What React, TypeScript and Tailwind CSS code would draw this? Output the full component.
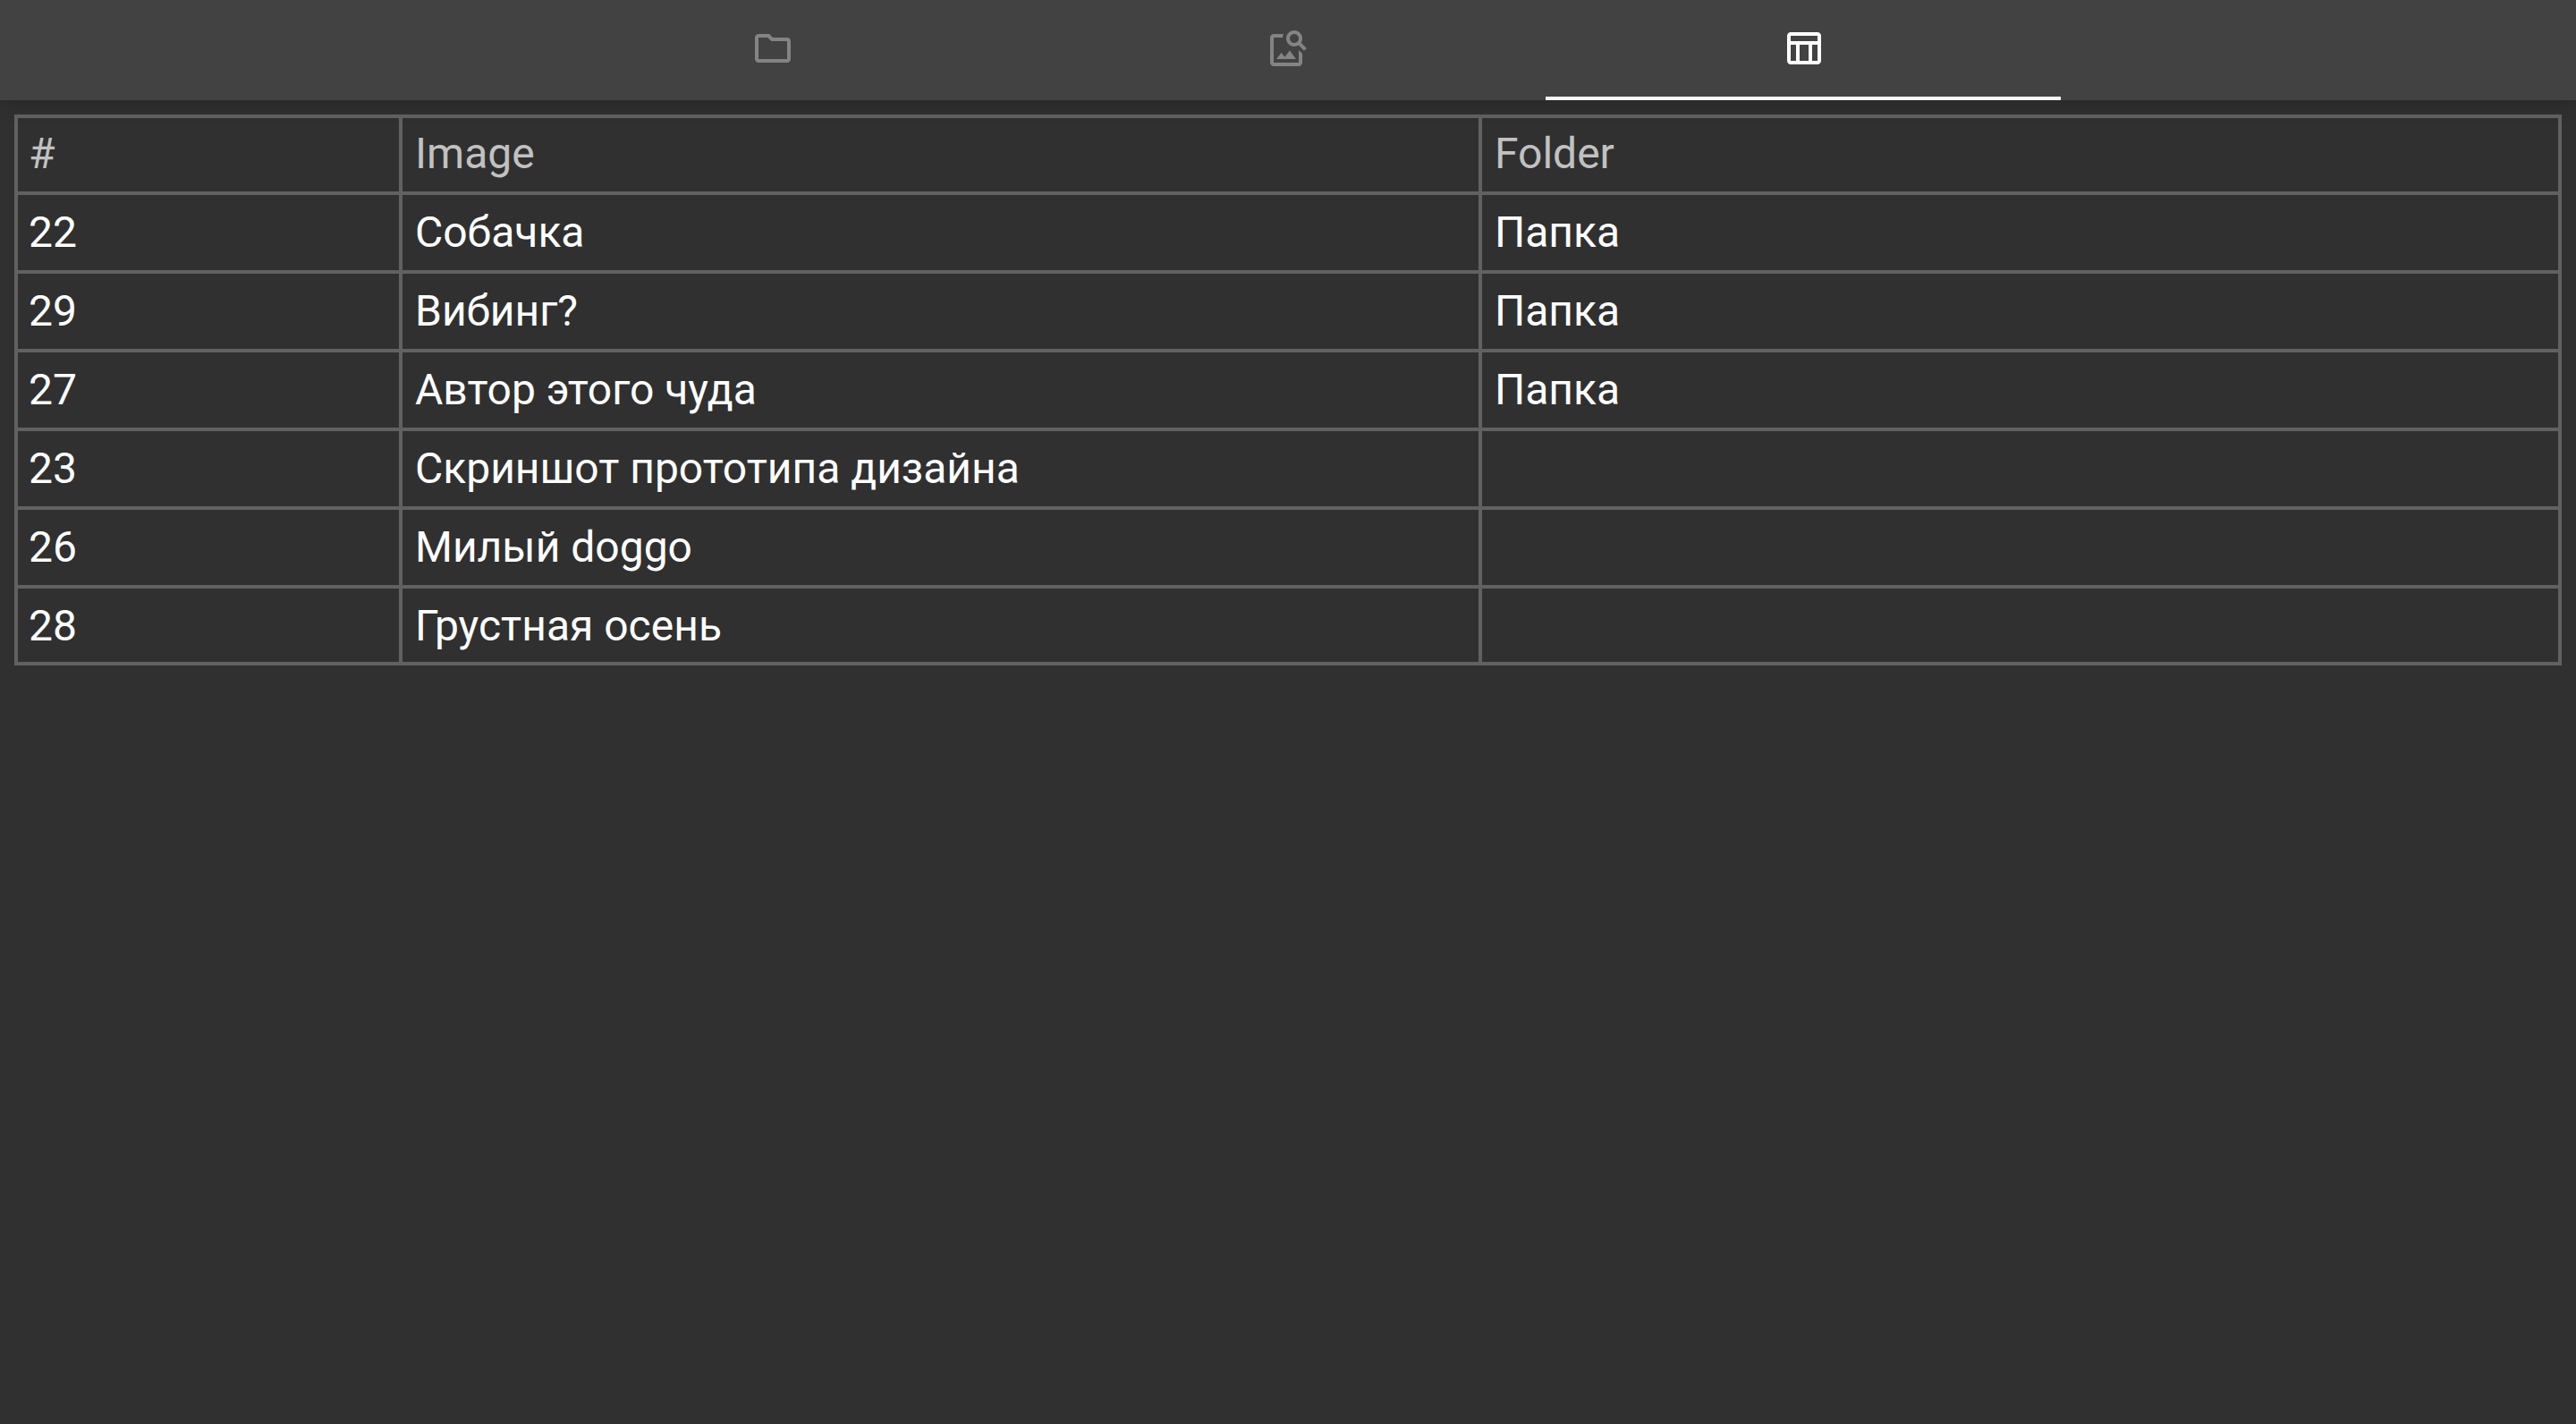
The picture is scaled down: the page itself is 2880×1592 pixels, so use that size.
const tabs = [
  {
    id: 'folders',
    label: 'Folders',
    path: 'M9.17 6l2 2H20v10H4V6h5.17M10 4H4c-1.1 0-1.99.9-1.99 2L2 18c0 1.1.9 2 2 2h16c1.1 0 2-.9 2-2V8c0-1.1-.9-2-2-2h-8l-2-2z',
  },
  {
    id: 'images',
    label: 'Image search',
    path: 'M18 13v7H4V6h5.02c.05-.71.22-1.38.48-2H4c-1.1 0-2 .9-2 2v14c0 1.1.9 2 2 2h14c1.1 0 2-.9 2-2v-5l-2-2zm-1.5 5h-11l2.75-3.53 1.96 2.36 2.75-3.54L16.5 18zm2.8-9.11c.44-.7.7-1.51.7-2.39C20 4.01 17.99 2 15.5 2S11 4.01 11 6.5s2.01 4.5 4.49 4.5c.88 0 1.7-.26 2.39-.7L21 13.42 22.42 12 19.3 8.89zM15.5 9C14.12 9 13 7.88 13 6.5S14.12 4 15.5 4 18 5.12 18 6.5 16.88 9 15.5 9z',
  },
  {
    id: 'table',
    label: 'Table',
    path: 'M20 3H5c-1.1 0-2 .9-2 2v14c0 1.1.9 2 2 2h15c1.1 0 2-.9 2-2V5c0-1.1-.9-2-2-2zm0 2v3H5V5h15zm-5 14h-5v-9h5v9zM5 10h3v9H5v-9zm12 9v-9h3v9h-3z',
  },
];

const activeTab = 'table';

const rows = [
  { id: 22, image: 'Собачка', folder: 'Папка' },
  { id: 29, image: 'Вибинг?', folder: 'Папка' },
  { id: 27, image: 'Автор этого чуда', folder: 'Папка' },
  { id: 23, image: 'Скриншот прототипа дизайна', folder: '' },
  { id: 26, image: 'Милый doggo', folder: '' },
  { id: 28, image: 'Грустная осень', folder: '' },
];

function TabBar() {
  return (
    <header className="relative bg-[#424242] shadow-[0_4px_20px_0_rgba(0,0,0,0.2)]">
      <div role="tablist" className="mx-auto flex w-3/5">
        {tabs.map((tab) => {
          const active = tab.id === activeTab;
          return (
            <button
              key={tab.id}
              type="button"
              role="tab"
              aria-selected={active}
              aria-label={tab.label}
              className={`flex h-28 flex-1 items-center justify-center border-b-4 ${
                active ? 'border-[#f5f5f5] text-white' : 'border-transparent text-[#848484]'
              }`}
            >
              <svg viewBox="0 0 24 24" className="size-12 fill-current" aria-hidden="true">
                <path d={tab.path} />
              </svg>
            </button>
          );
        })}
      </div>
    </header>
  );
}

function ImageTable() {
  return (
    <table className="w-full table-fixed border-separate border-spacing-0 border-4 border-[#616161] text-left text-[48px] leading-[60px]">
      <colgroup>
        <col className="w-[15%]" />
        <col />
        <col />
      </colgroup>
      <thead>
        <tr className="text-[#c1c1c1]">
          {['#', 'Image', 'Folder'].map((title) => (
            <th
              key={title}
              scope="col"
              className="border-l-4 border-[#616161] px-[14px] pt-[10px] pb-3 font-normal first:border-l-0 first:pl-3"
            >
              {title}
            </th>
          ))}
        </tr>
      </thead>
      <tbody className="text-white">
        {rows.map((row) => (
          <tr key={row.id} className="group">
            {[row.id, row.image, row.folder].map((value, column) => (
              <td
                key={column}
                className="border-t-4 border-l-4 border-[#616161] px-[14px] pt-3 pb-3 first:border-l-0 first:pl-3 group-last:pb-[10px]"
              >
                {value}
              </td>
            ))}
          </tr>
        ))}
      </tbody>
    </table>
  );
}

export default function App() {
  return (
    <div className="min-h-screen bg-[#303030] font-[Roboto,sans-serif]">
      <TabBar />
      <main className="p-4">
        <ImageTable />
      </main>
    </div>
  );
}
